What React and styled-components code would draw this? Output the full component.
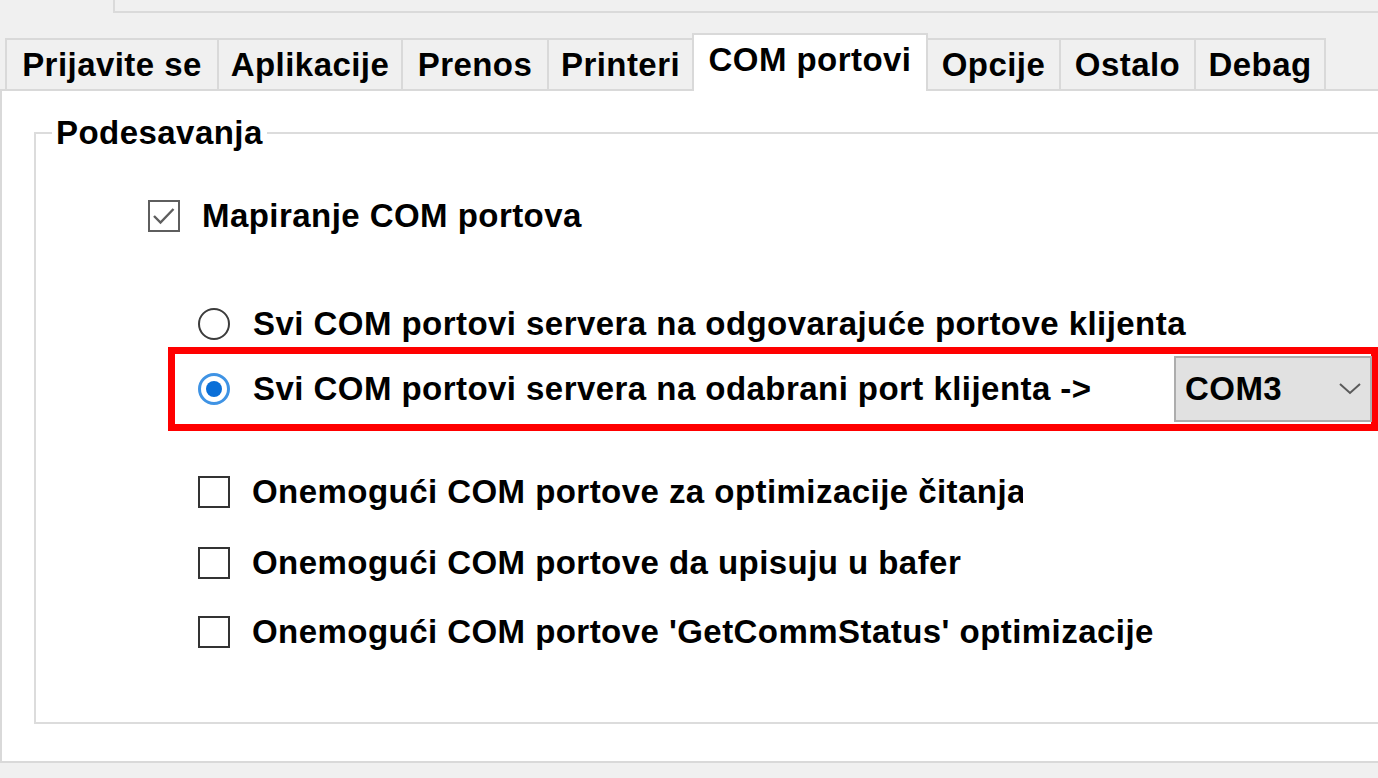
import React from 'react';
import styled, { createGlobalStyle } from 'styled-components';

const Global = createGlobalStyle`
  html, body { margin: 0; padding: 0; background: #f0f0f0; }
  body {
    font-family: "Liberation Sans", Arial, sans-serif;
    font-weight: 700;
    font-size: 33px;
    letter-spacing: 0.45px;
    color: #000;
  }
  * { box-sizing: border-box; }
`;

const Window = styled.div`
  width: 1378px;
  height: 778px;
  overflow: hidden;
  background: #f0f0f0;
  display: flex;
  flex-direction: column;
`;

const TopArea = styled.div`
  flex: none;
  height: 33px;
`;

const TopBox = styled.div`
  margin-left: 113px;
  height: 13px;
  border-left: 2px solid #dadada;
  border-bottom: 2px solid #dadada;
`;

const TabBar = styled.div`
  flex: none;
  height: 56px;
  display: flex;
  align-items: flex-end;
  padding-left: 5px;
  position: relative;
  z-index: 1;
`;

const Tab = styled.div`
  flex: none;
  width: ${p => p.$w}px;
  height: ${p => (p.$active ? 58 : 51)}px;
  margin-bottom: ${p => (p.$active ? -2 : 0)}px;
  background: ${p => (p.$active ? '#ffffff' : '#f0f0f0')};
  border-top: 2px solid #d9d9d9;
  border-left: ${p => (p.$noLeft ? 'none' : '2px solid #d9d9d9')};
  border-right: ${p => (p.$active || p.$last ? '2px solid #d9d9d9' : 'none')};
  text-align: center;
  line-height: 50px;
  white-space: nowrap;
`;

const Panel = styled.div`
  flex: none;
  width: 1420px;
  height: 674px;
  background: #ffffff;
  border: 2px solid #d9d9d9;
  display: flex;
  flex-direction: column;
`;

const Group = styled.fieldset`
  flex: none;
  margin: 24px 0 0 32px;
  padding: 0;
  width: 1400px;
  height: 609px;
  border: 2px solid #dcdcdc;
  display: flex;
  flex-direction: column;
`;

const GroupTitle = styled.legend`
  margin-left: 16px;
  padding: 0 4px;
  line-height: 36px;
`;

const Row = styled.div`
  flex: none;
  display: flex;
  align-items: center;
  height: 40px;
  line-height: 40px;
  white-space: nowrap;
  margin-top: ${p => p.$mt}px;
  margin-left: ${p => p.$ml}px;
  gap: ${p => p.$gap}px;
`;

const Highlight = styled.div`
  flex: none;
  margin-top: ${p => p.$mt}px;
  margin-left: 132px;
  width: 1210px;
  height: 84px;
  border: 7px solid #ff0000;
  display: flex;
  align-items: center;
  justify-content: space-between;
  padding-left: 23px;
`;

const Choice = styled.div`
  display: flex;
  align-items: center;
  gap: 23px;
  line-height: 40px;
  white-space: nowrap;
`;

const Box = styled.span`
  flex: none;
  width: 32px;
  height: 32px;
  background: #fff;
  border: 2px solid ${p => (p.$checked ? '#5e5e5e' : '#333333')};
  display: flex;
  align-items: center;
  justify-content: center;
`;

const Radio = styled.span`
  flex: none;
  width: 32px;
  height: 32px;
  border-radius: 50%;
  background: #fff;
  border: ${p => (p.$checked ? '3px solid #3f93e4' : '2px solid #3c3c3c')};
  display: flex;
  align-items: center;
  justify-content: center;
  &::after {
    content: '';
    display: ${p => (p.$checked ? 'block' : 'none')};
    width: 16px;
    height: 16px;
    border-radius: 50%;
    background: #0a6fd8;
  }
`;

const Clip = styled.span`
  display: block;
  max-width: ${p => p.$max}px;
  overflow: hidden;
`;

const Combo = styled.div`
  flex: none;
  width: 198px;
  height: 66px;
  margin-right: -1px;
  background: #e1e1e1;
  border: 2px solid #adadad;
  display: flex;
  align-items: center;
  justify-content: space-between;
  padding: 0 8px 0 9px;
  line-height: 40px;
`;

const tabs = [
  { label: 'Prijavite se', w: 212 },
  { label: 'Aplikacije', w: 184 },
  { label: 'Prenos', w: 146 },
  { label: 'Printeri', w: 145 },
  { label: 'COM portovi', w: 236, active: true },
  { label: 'Opcije', w: 131, noLeft: true },
  { label: 'Ostalo', w: 135 },
  { label: 'Debag', w: 132, last: true },
];

const CheckMark = () => (
  <svg width="28" height="28" viewBox="0 0 28 28">
    <path d="M4 14 L10.5 20.5 L23.5 7" fill="none" stroke="#5e5e5e" strokeWidth="2.4" />
  </svg>
);

const Chevron = () => (
  <svg width="24" height="14" viewBox="0 0 24 14">
    <path d="M2 2 L12 11 L22 2" fill="none" stroke="#5a5a5a" strokeWidth="2" />
  </svg>
);

export default function App() {
  return (
    <Window>
      <Global />
      <TopArea>
        <TopBox />
      </TopArea>
      <TabBar>
        {tabs.map(t => (
          <Tab key={t.label} $w={t.w} $active={t.active} $noLeft={t.noLeft} $last={t.last}>
            {t.label}
          </Tab>
        ))}
      </TabBar>
      <Panel>
        <Group>
          <GroupTitle>Podesavanja</GroupTitle>
          <Row $mt={45} $ml={112} $gap={22}>
            <Box $checked>
              <CheckMark />
            </Box>
            <span>Mapiranje COM portova</span>
          </Row>
          <Row $mt={68} $ml={162} $gap={23}>
            <Radio />
            <span>Svi COM portovi servera na odgovarajuće portove klijenta</span>
          </Row>
          <Highlight $mt={3}>
            <Choice>
              <Radio $checked />
              <span>Svi COM portovi servera na odabrani port klijenta -&gt;</span>
            </Choice>
            <Combo>
              <span>COM3</span>
              <Chevron />
            </Combo>
          </Highlight>
          <Row $mt={41} $ml={162} $gap={22}>
            <Box />
            <Clip $max={771}>Onemogući COM portove za optimizacije čitanja</Clip>
          </Row>
          <Row $mt={31} $ml={162} $gap={22}>
            <Box />
            <span>Onemogući COM portove da upisuju u bafer</span>
          </Row>
          <Row $mt={29} $ml={162} $gap={22}>
            <Box />
            <span>Onemogući COM portove 'GetCommStatus' optimizacije</span>
          </Row>
        </Group>
      </Panel>
    </Window>
  );
}
